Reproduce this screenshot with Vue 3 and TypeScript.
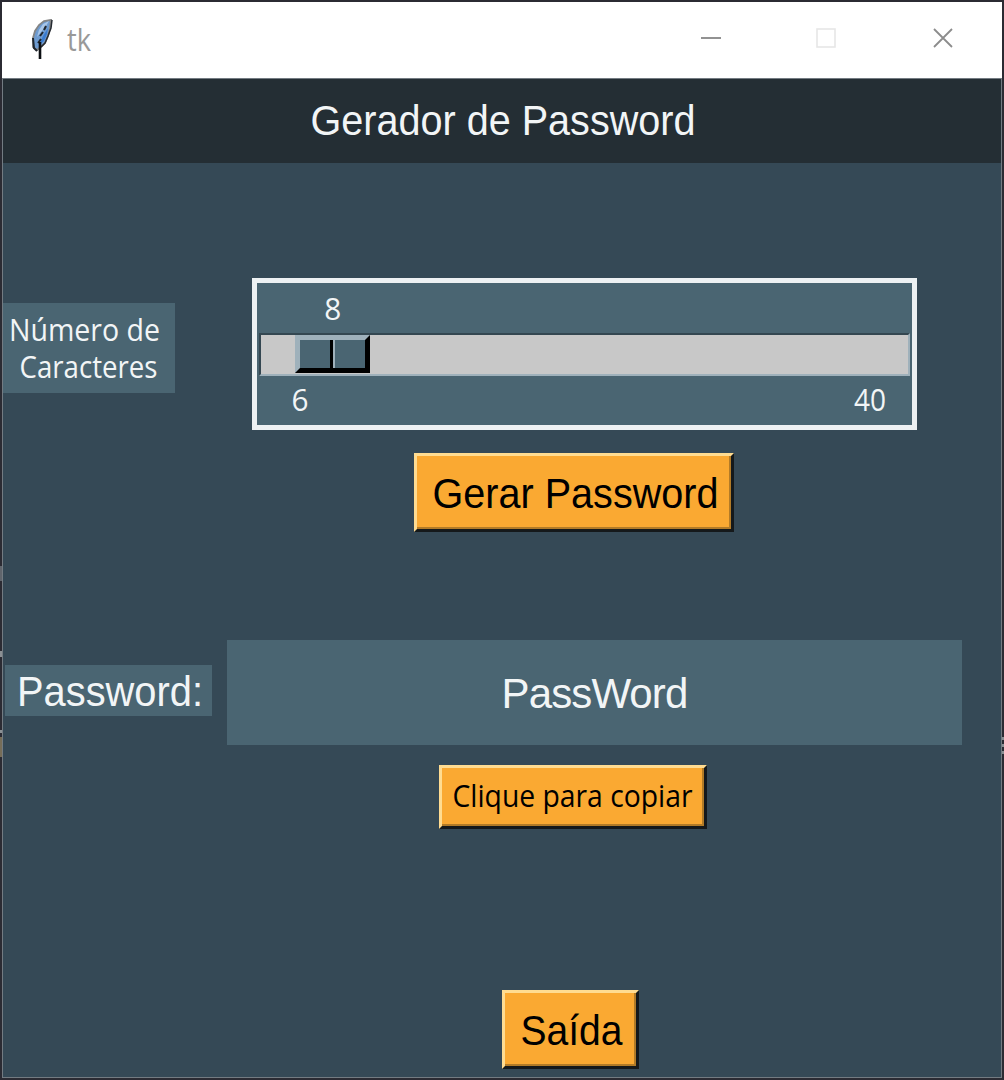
<script setup lang="ts">
import { computed, ref } from 'vue'

const min = 6
const max = 40
const length = ref(8)
const password = ref('PassWord')

// Travel of the slider, in pixels, from the left end of the trough
const thumbLeft = computed(() => ((length.value - min) / (max - min)) * 572)

function generate(): void {
  const chars = 'ABCDEFGHIJKLMNOPQRSTUVWXYZabcdefghijklmnopqrstuvwxyz0123456789'
  password.value = Array.from({ length: length.value }, () => chars[Math.floor(Math.random() * chars.length)]).join('')
}

function copy(): void {
  navigator.clipboard?.writeText(password.value)
}
</script>

<template>
  <div class="desktop">
    <div class="specks left"><i></i><i></i><i></i><i></i></div>
    <div class="specks right"><i></i><i></i><i></i></div>
    <div class="window">
      <header class="titlebar">
        <svg class="feather" width="26" height="42" viewBox="0 0 26 42">
          <path d="M23 3 L16 4 L11 8 L7 14 L5 21 L5 30 L9 33 L13 30 L17 26 L20 19 L22 11 Z" fill="#6e9bd0" stroke="#858585" stroke-width="1.8" />
          <path d="M21 4 L15 7 L11 13 L9 20 L13 15 L18 9 Z" fill="#a9c6e8" />
          <path d="M20 11 L15 19 L11 28 L16 24 L19 17 Z" fill="#397bd0" />
          <path d="M24 3 L23 11 L20 19 L17 26 L13 30" fill="none" stroke="#252a31" stroke-width="1.5" />
          <path d="M18 9 L16 13 M15 15 L12 19 M13 22 L10 26 M5 21 L6 31 L9 34" fill="none" stroke="#20262d" stroke-width="2" />
          <path d="M12 25 V42" fill="none" stroke="#0c0f13" stroke-width="2.6" />
        </svg>
        <svg class="name" width="40" height="46"><text x="0" y="33" textLength="24" lengthAdjust="spacingAndGlyphs">tk</text></svg>
        <svg class="controls" width="260" height="24" viewBox="0 0 260 24">
          <path d="M1 12H21" stroke="#929292" stroke-width="2" fill="none" />
          <rect x="117" y="3" width="18" height="18" stroke="#e7e7e7" stroke-width="1.6" fill="none" />
          <path d="M234 3L252 21M252 3L234 21" stroke="#8c8c8c" stroke-width="1.8" fill="none" />
        </svg>
      </header>
      <main class="client">
        <h1 class="banner"><svg width="400" height="60"><text class="arial light" x="4.5" y="44" textLength="385" lengthAdjust="spacingAndGlyphs">Gerador de Password</text></svg></h1>

        <section class="row length-row">
          <div class="count-label">
            <svg width="171" height="90">
              <text class="ui light" x="6" y="38" textLength="151" lengthAdjust="spacingAndGlyphs">Número de</text>
              <text class="ui light" x="16.5" y="75" textLength="138" lengthAdjust="spacingAndGlyphs">Caracteres</text>
            </svg>
          </div>
          <div class="scale">
            <div class="value"><svg width="640" height="49"><text class="ui light" :x="thumbLeft + 33.5" y="37" textLength="17" lengthAdjust="spacingAndGlyphs">{{ length }}</text></svg></div>
            <div class="trough">
              <div class="thumb" :style="{ marginLeft: thumbLeft + 'px' }"><span></span><span></span></div>
            </div>
            <div class="limits">
              <svg width="655" height="48">
                <text class="ui light" x="34.5" y="34.5" textLength="17" lengthAdjust="spacingAndGlyphs">{{ min }}</text>
                <text class="ui light" x="597" y="34.5" textLength="32" lengthAdjust="spacingAndGlyphs">{{ max }}</text>
              </svg>
            </div>
          </div>
        </section>

        <button class="generate" @click="generate"><svg width="314" height="73"><text class="arial" x="15.5" y="52" textLength="286" lengthAdjust="spacingAndGlyphs">Gerar Password</text></svg></button>

        <section class="row password-row">
          <div class="pass-label"><svg width="207" height="51"><text class="arial light" x="12" y="41" textLength="186" lengthAdjust="spacingAndGlyphs">Password:</text></svg></div>
          <output class="pass-box"><svg width="735" height="105"><text class="arial light field" x="367.5" y="68" text-anchor="middle">{{ password }}</text></svg></output>
        </section>

        <button class="copy" @click="copy"><svg width="262" height="58"><text class="ui" x="10.5" y="39" textLength="240" lengthAdjust="spacingAndGlyphs">Clique para copiar</text></svg></button>
        <button class="exit"><svg width="131" height="73"><text class="arial" x="15.5" y="52" textLength="102" lengthAdjust="spacingAndGlyphs">Saída</text></svg></button>
      </main>
    </div>
  </div>
</template>

<style>
body {
  margin: 0;
  overflow: hidden;
}
</style>

<style scoped>
* {
  box-sizing: border-box;
}

svg {
  display: block;
  overflow: visible;
}

.desktop {
  position: relative;
  width: 1004px;
  height: 1080px;
  padding: 2px;
  background: #2b2b33;
}

.window {
  display: flex;
  flex-direction: column;
  width: 1000px;
  height: 1076px;
}

.titlebar {
  display: flex;
  flex: none;
  height: 76px;
  background: #fff;
}

.feather {
  margin: 15px 0 0 26px;
}

.name {
  margin: 16px 0 0 13px;
}

.name text {
  font: 31px "Open Sans", "Noto Sans", sans-serif;
  fill: #999;
}

.controls {
  margin: 24px 0 0 593px;
}

.client {
  display: flex;
  flex: 1;
  flex-direction: column;
  border: 1px solid #737b82;
  background: #354956;
}

.arial {
  font: 42px "Liberation Sans", Arial, sans-serif;
}

.field {
  letter-spacing: -0.9px;
}

.ui {
  font: 31px "Open Sans", "Noto Sans", sans-serif;
}

.light {
  fill: #f2f5f6;
}

.banner {
  display: flex;
  flex: none;
  height: 84px;
  margin: 0;
  padding: 12px 0 0 303px;
  background: #242e34;
}

.row {
  display: flex;
  flex: none;
}

.length-row {
  height: 152px;
  margin-top: 115px;
}

.count-label {
  width: 172px;
  height: 90px;
  margin-top: 25px;
  background: #4a6572;
}

.scale {
  width: 665px;
  height: 152px;
  margin-left: 77px;
  border: 5px solid #edf1f3;
  background: #4a6572;
}

.value {
  height: 50px;
}

.trough {
  width: 651px;
  height: 43px;
  margin-left: 2px;
  border: 2px solid;
  border-color: #344751 #9fb1bb #9fb1bb #344751;
  background: #c8c8c8;
}

.thumb {
  display: flex;
  width: 75px;
  height: 38px;
  border: 5px solid;
  border-color: #9fb1bb #000 #000 #9fb1bb;
  background: #4a6572;
}

.thumb span {
  flex: 1;
}

.thumb span:first-child {
  flex: 0 0 33px;
  border-right: 3px solid #000;
}

.thumb span:last-child {
  border-left: 2px solid #9fb1bb;
}

button {
  flex: none;
  padding: 0;
  border: 3px solid;
  border-color: #ffdc91 #15191b #15191b #ffdc91;
  background: #faa932;
  box-shadow: inset -2px -2px 0 #b27b27;
}

.generate {
  width: 320px;
  height: 79px;
  margin: 23px 0 0 411px;
}

.password-row {
  height: 105px;
  margin-top: 108px;
}

.pass-label {
  width: 207px;
  height: 51px;
  margin: 25px 0 0 2px;
  background: #4a6572;
}

.pass-box {
  width: 735px;
  height: 105px;
  margin-left: 15px;
  background: #4a6572;
}

.copy {
  width: 268px;
  height: 64px;
  margin: 20px 0 0 436px;
}

.exit {
  width: 137px;
  height: 79px;
  margin: 161px 0 0 499px;
}

/* Fragments of the desktop showing beside the window */
.specks {
  position: absolute;
  display: flex;
  flex-direction: column;
  width: 2px;
}

.specks.left {
  top: 566px;
  left: 0;
}

.specks.right {
  top: 737px;
  right: 0;
  gap: 4px;
}

.specks i {
  height: 3px;
  background: #8b9094;
}

.specks.left i:nth-child(1) {
  height: 15px;
  background: #60656c;
}

.specks.left i:nth-child(2) {
  height: 6px;
  margin-top: 70px;
}

.specks.left i:nth-child(3) {
  margin-top: 73px;
}

.specks.left i:nth-child(4) {
  height: 20px;
  margin-top: 4px;
  background: #766d58;
}
</style>
